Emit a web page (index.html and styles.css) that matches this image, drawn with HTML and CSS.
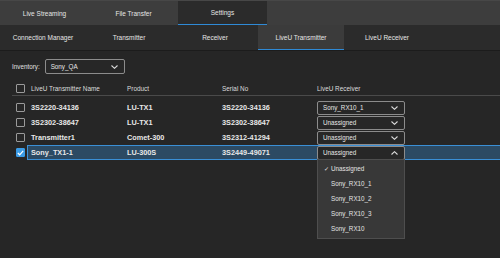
FILE: index.html
```html
<!DOCTYPE html>
<html>
<head>
<meta charset="utf-8">
<link rel="stylesheet" href="styles.css">
</head>
<body>
<div class="app">
  <nav class="tabs-main">
    <div class="tab">Live Streaming</div>
    <div class="tab">File Transfer</div>
    <div class="tab active">Settings</div>
  </nav>
  <nav class="tabs-sub">
    <div class="tab">Connection Manager</div>
    <div class="tab">Transmitter</div>
    <div class="tab">Receiver</div>
    <div class="tab active">LiveU Transmitter</div>
    <div class="tab">LiveU Receiver</div>
  </nav>
  <main class="content">
    <div class="inventory">
      <span class="inv-label">Inventory:</span>
      <div class="select inv-select"><span>Sony_QA</span><svg class="chev" width="7" height="4" viewBox="0 0 7 4"><polyline points="0.5,0.5 3.5,3.3 6.5,0.5" fill="none" stroke="#dcdcdc" stroke-width="1.1"/></svg></div>
    </div>
    <div class="table">
      <div class="row head">
        <div class="cb-cell"><span class="checkbox"></span></div>
        <div class="row-body">
          <div class="cell">LiveU Transmitter Name</div>
          <div class="cell">Product</div>
          <div class="cell">Serial No</div>
          <div class="cell">LiveU Receiver</div>
        </div>
      </div>
      <div class="rows">
        <div class="row">
          <div class="cb-cell"><span class="checkbox"></span></div>
          <div class="row-body">
            <div class="cell">3S2220-34136</div>
            <div class="cell">LU-TX1</div>
            <div class="cell">3S2220-34136</div>
            <div class="cell"><div class="select rx-select"><span>Sony_RX10_1</span><svg class="chev" width="7" height="4" viewBox="0 0 7 4"><polyline points="0.5,0.5 3.5,3.3 6.5,0.5" fill="none" stroke="#dcdcdc" stroke-width="1.1"/></svg></div></div>
          </div>
        </div>
        <div class="row">
          <div class="cb-cell"><span class="checkbox"></span></div>
          <div class="row-body">
            <div class="cell">3S2302-38647</div>
            <div class="cell">LU-TX1</div>
            <div class="cell">3S2302-38647</div>
            <div class="cell"><div class="select rx-select"><span>Unassigned</span><svg class="chev" width="7" height="4" viewBox="0 0 7 4"><polyline points="0.5,0.5 3.5,3.3 6.5,0.5" fill="none" stroke="#dcdcdc" stroke-width="1.1"/></svg></div></div>
          </div>
        </div>
        <div class="row">
          <div class="cb-cell"><span class="checkbox"></span></div>
          <div class="row-body">
            <div class="cell">Transmitter1</div>
            <div class="cell">Comet-300</div>
            <div class="cell">3S2312-41294</div>
            <div class="cell"><div class="select rx-select"><span>Unassigned</span><svg class="chev" width="7" height="4" viewBox="0 0 7 4"><polyline points="0.5,0.5 3.5,3.3 6.5,0.5" fill="none" stroke="#dcdcdc" stroke-width="1.1"/></svg></div></div>
          </div>
        </div>
        <div class="row selected">
          <div class="cb-cell"><span class="checkbox checked"><svg width="7" height="6" viewBox="0 0 7 6"><polyline points="0.8,3 2.7,4.8 6.2,0.8" fill="none" stroke="#ffffff" stroke-width="1.2"/></svg></span></div>
          <div class="row-body">
            <div class="cell">Sony_TX1-1</div>
            <div class="cell">LU-300S</div>
            <div class="cell">3S2449-49071</div>
            <div class="cell">
              <div class="select rx-select open"><span>Unassigned</span><svg class="chev" width="7" height="4" viewBox="0 0 7 4"><polyline points="0.5,3.5 3.5,0.7 6.5,3.5" fill="none" stroke="#dcdcdc" stroke-width="1.1"/></svg>
                <ul class="menu">
                  <li class="item checked"><span class="tick">✓</span>Unassigned</li>
                  <li class="item">Sony_RX10_1</li>
                  <li class="item">Sony_RX10_2</li>
                  <li class="item">Sony_RX10_3</li>
                  <li class="item">Sony_RX10</li>
                </ul>
              </div>
            </div>
          </div>
        </div>
      </div>
    </div>
  </main>
</div>
</body>
</html>
```
FILE: styles.css
```css
* { box-sizing: border-box; }
html, body { margin: 0; padding: 0; }
body {
  width: 500px;
  height: 258px;
  overflow: hidden;
  background: #262626;
  font-family: "Liberation Sans", Arial, sans-serif;
  color: #e4e4e4;
}
.app { width: 500px; height: 258px; background: #262626; }

.tabs-main {
  display: flex;
  height: 25px;
  background: #3d3d3d;
  border-top: 1px solid #474747;
}
.tabs-main .tab {
  width: 89px;
  display: flex;
  align-items: center;
  justify-content: center;
  font-size: 6.5px;
  color: #e6e6e6;
}
.tabs-main .tab.active {
  background: #2b2b2b;
  border-bottom: 1px solid #2f8ad6;
}

.tabs-sub {
  display: flex;
  height: 26px;
  background: #2b2b2b;
  border-bottom: 1px solid #1c1c1c;
}
.tabs-sub .tab {
  width: 86px;
  display: flex;
  align-items: center;
  justify-content: center;
  font-size: 6.5px;
  color: #e6e6e6;
}
.tabs-sub .tab.active {
  background: #3b3b3b;
  border-bottom: 1px solid #2f8ad6;
}

.content { padding: 8px 0 0 12px; }

.inventory {
  display: flex;
  align-items: center;
  gap: 5px;
  height: 15px;
}
.inv-label { font-size: 6.3px; color: #e0e0e0; }

.select {
  position: relative;
  display: flex;
  align-items: center;
  justify-content: space-between;
  height: 15px;
  padding: 0 6px 0 5px;
  border: 1px solid #8c8c8c;
  border-radius: 2px;
  background: #272727;
  font-size: 6.3px;
  font-weight: normal;
  color: #e6e6e6;
}
.inv-select { width: 80px; }
.rx-select { width: 88px; height: 14px; }

.table { margin-top: 7px; }
.row {
  display: grid;
  grid-template-columns: 15px 1fr;
  height: 15px;
}
.row.head {
  border-bottom: 1px solid #4a4a4a;
  height: 15px;
  margin-bottom: 4px;
}
.cb-cell {
  display: flex;
  align-items: center;
  padding-left: 4px;
}
.checkbox {
  display: flex;
  align-items: center;
  justify-content: center;
  width: 9px;
  height: 9px;
  border: 1px solid #9a9a9a;
  border-radius: 1px;
}
.checkbox.checked {
  background: #3a9be6;
  border-color: #3a9be6;
}
.row-body {
  display: grid;
  grid-template-columns: 96px 95px 95px 1fr;
  align-items: center;
}
.cell {
  padding-left: 4px;
  font-size: 7.3px;
  font-weight: bold;
  color: #e8e8e8;
  white-space: nowrap;
}
.row.head .cell {
  font-size: 6.4px;
  font-weight: normal;
  color: #dcdcdc;
}
.row.selected .row-body {
  background: #2c4a63;
  box-shadow: inset 1px 1px 0 #3a8fd6, inset 0 -1px 0 #3a8fd6;
}

.menu {
  position: absolute;
  top: 100%;
  left: -1px;
  width: 88px;
  margin: 0;
  padding: 2px 0 3px;
  list-style: none;
  background: #383838;
  border: 1px solid #4e4e4e;
  z-index: 5;
}
.item {
  position: relative;
  height: 14.8px;
  display: flex;
  align-items: center;
  padding-left: 13px;
  font-size: 6.3px;
  font-weight: normal;
  color: #e4e4e4;
}
.tick {
  position: absolute;
  left: 6px;
  font-size: 6px;
}
```
